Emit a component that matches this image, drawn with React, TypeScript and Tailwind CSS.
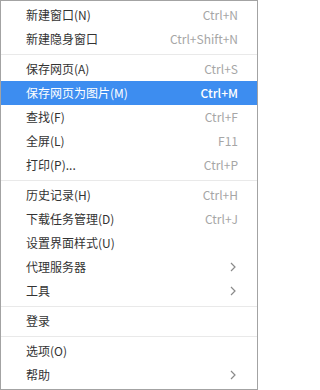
type Item = { label: string; shortcut?: string; sub?: boolean; active?: boolean } | "sep";

const items: Item[] = [
  { label: "新建窗口(N)", shortcut: "Ctrl+N" },
  { label: "新建隐身窗口", shortcut: "Ctrl+Shift+N" },
  "sep",
  { label: "保存网页(A)", shortcut: "Ctrl+S" },
  { label: "保存网页为图片(M)", shortcut: "Ctrl+M", active: true },
  { label: "查找(F)", shortcut: "Ctrl+F" },
  { label: "全屏(L)", shortcut: "F11" },
  { label: "打印(P)...", shortcut: "Ctrl+P" },
  "sep",
  { label: "历史记录(H)", shortcut: "Ctrl+H" },
  { label: "下载任务管理(D)", shortcut: "Ctrl+J" },
  { label: "设置界面样式(U)" },
  { label: "代理服务器", sub: true },
  { label: "工具", sub: true },
  "sep",
  { label: "登录" },
  "sep",
  { label: "选项(O)" },
  { label: "帮助", sub: true },
];

function Chevron() {
  return (
    <svg width="6" height="10" viewBox="0 0 6 10" className="mr-[2px]">
      <path d="M1 1 L5 5 L1 9" fill="none" stroke="#8a8a8a" strokeWidth="1.2" />
    </svg>
  );
}

export default function App() {
  return (
    <div
      className="box-border flex h-[390px] w-[258px] flex-col border border-[#a3a3a3] bg-white pt-[2px] text-[12px] text-[#333333]"
      style={{ fontFamily: '"Noto Sans CJK SC", "Noto Sans", sans-serif' }}
    >
      {items.map((item, i) =>
        item === "sep" ? (
          <div key={i} className="flex h-[6px] items-center">
            <div className="h-px w-full bg-[#e9e9e9]" />
          </div>
        ) : (
          <div
            key={i}
            className={`flex h-[24px] items-center justify-between pl-[25px] pr-[19px] ${
              item.active ? "bg-[#3d8df0] text-white" : ""
            }`}
          >
            <span>{item.label}</span>
            {item.shortcut && (
              <span className={item.active ? "font-medium text-white" : "text-[#a6a6a6]"}>
                {item.shortcut}
              </span>
            )}
            {item.sub && <Chevron />}
          </div>
        )
      )}
    </div>
  );
}
